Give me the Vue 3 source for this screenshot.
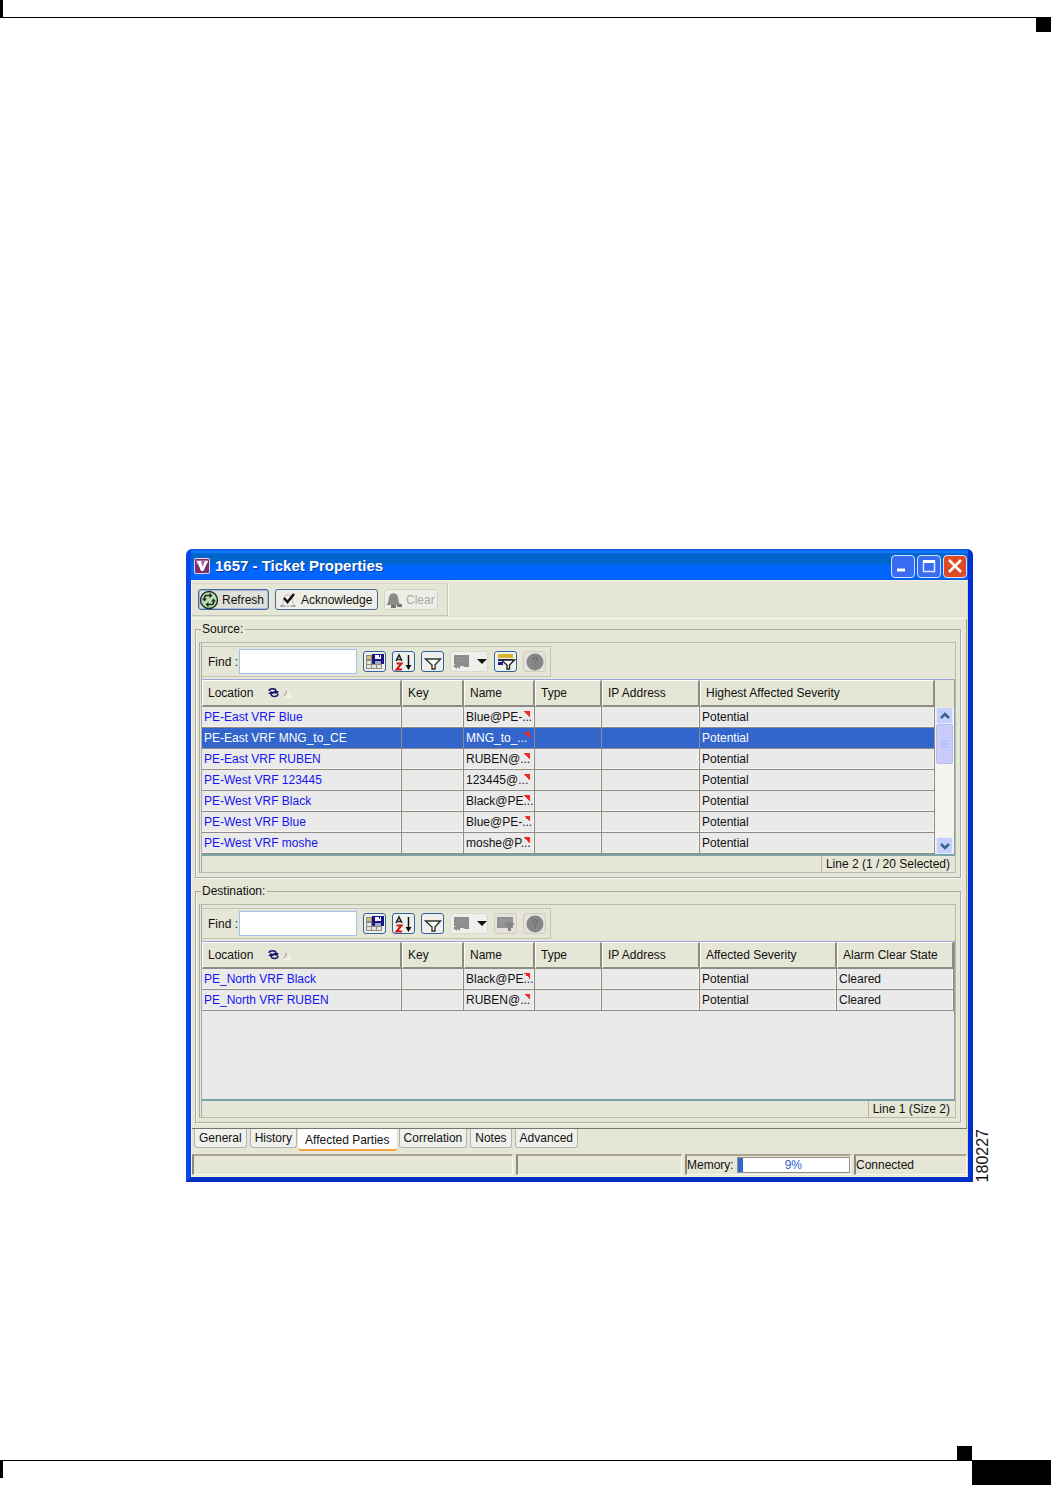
<script setup>
import { ref } from 'vue'

const panels = [
  {
    id: 'source',
    title: 'Source:',
    columns: ['Location', 'Key', 'Name', 'Type', 'IP Address', 'Highest Affected Severity'],
    rows: [
      ['PE-East VRF Blue', '', 'Blue@PE-...', '', '', 'Potential'],
      ['PE-East VRF MNG_to_CE', '', 'MNG_to_...', '', '', 'Potential'],
      ['PE-East VRF RUBEN', '', 'RUBEN@...', '', '', 'Potential'],
      ['PE-West VRF 123445', '', '123445@...', '', '', 'Potential'],
      ['PE-West VRF Black', '', 'Black@PE...', '', '', 'Potential'],
      ['PE-West VRF Blue', '', 'Blue@PE-...', '', '', 'Potential'],
      ['PE-West VRF moshe', '', 'moshe@P...', '', '', 'Potential'],
    ],
    selected: 1,
    scroll: true,
    status: 'Line 2 (1 / 20 Selected)',
  },
  {
    id: 'destination',
    title: 'Destination:',
    columns: ['Location', 'Key', 'Name', 'Type', 'IP Address', 'Affected Severity', 'Alarm Clear State'],
    rows: [
      ['PE_North VRF Black', '', 'Black@PE...', '', '', 'Potential', 'Cleared'],
      ['PE_North VRF RUBEN', '', 'RUBEN@...', '', '', 'Potential', 'Cleared'],
    ],
    selected: -1,
    scroll: false,
    status: 'Line 1 (Size 2)',
  },
]

const tabs = ['General', 'History', 'Affected Parties', 'Correlation', 'Notes', 'Advanced']
const activeTab = ref('Affected Parties')
const find = ref({ source: '', destination: '' })
const memory = 9
</script>

<template>
  <div class="page">
    <header class="page-head"><span class="head-mark"></span></header>

    <main class="figure">
      <div class="window">
        <div class="titlebar">
          <svg class="logo" width="16" height="16" viewBox="0 0 16 16" aria-hidden="true">
            <rect width="16" height="16" rx="2" fill="#e9d3e6" />
            <rect x="1" y="1" width="14" height="14" rx="1" fill="#7b2f6e" />
            <path d="M2 2h12v3L8 9 2 6z" fill="#a9679c" />
            <path d="M3 3h4l1.500 6L11 3h3L9.500 13H7z" fill="#fff" />
          </svg>
          <h1>1657 - Ticket Properties</h1>
          <button class="win-btn" aria-label="Minimize">
            <svg width="20" height="20" viewBox="0 0 20 20"><path d="M4 14h8" stroke="#fff" stroke-width="3" /></svg>
          </button>
          <button class="win-btn" aria-label="Maximize">
            <svg width="20" height="20" viewBox="0 0 20 20"><path d="M4.500 5.500h11v10h-11z" fill="none" stroke="#dfe8ff" stroke-width="1.500" /><path d="M4 5.500h12" stroke="#fff" stroke-width="3" /></svg>
          </button>
          <button class="win-btn close" aria-label="Close">
            <svg width="20" height="20" viewBox="0 0 20 20"><path d="M4 4l12 12M16 4L4 16" stroke="#fff" stroke-width="2.500" /></svg>
          </button>
        </div>

        <div class="client">
          <div class="toolbar">
            <div class="tool-group">
              <button class="tool-btn refresh">
                <svg width="20" height="20" viewBox="0 0 20 20" aria-hidden="true">
                  <circle cx="10" cy="10" r="8.500" fill="#b9dcb4" stroke="#1d2a1d" stroke-width="1.400" />
                  <path d="M5.500 9V7.500c0-1.500 1-2 2-2H11M14.500 11v1.500c0 1.500-1 2-2 2H9" fill="none" stroke="#1d2a1d" stroke-width="1.600" />
                  <path d="M10.500 2.800v5.400l3-2.700zM9.500 11.800v5.400l-3-2.700zM3 8.500h5l-2.500 3zM12 11.500h5l-2.500-3z" fill="#1d2a1d" />
                </svg>
                Refresh
              </button>
              <button class="tool-btn ack">
                <svg width="20" height="18" viewBox="0 0 20 18" aria-hidden="true">
                  <path d="M3 15c3-2 2-5 3-8 1-4 7-4 8 0 1 3 0 6 3 8z" fill="#f4f4f4" stroke="#b5b5b5" />
                  <path d="M2 15h5M13 15h5" stroke="#888" />
                  <path d="M6 7l3.500 4L16 3" fill="none" stroke="#111" stroke-width="2.500" />
                </svg>
                Acknowledge
              </button>
              <button class="tool-btn clear" disabled>
                <svg width="18" height="18" viewBox="0 0 18 18" aria-hidden="true">
                  <path d="M1 14c3-2 2-5 3-8 1-5 8-5 9 0 1 3 0 6 3 8z" fill="#8b8b8b" />
                  <path d="M6 14h5v3H6zM12 13h5v3h-5z" fill="#777" />
                </svg>
                Clear
              </button>
            </div>
          </div>

          <div class="content">
            <fieldset v-for="p in panels" :key="p.id" class="panel">
              <legend>{{ p.title }}</legend>
              <div class="panel-inner">
                <div class="finder">
                  <label :for="'find-' + p.id">Find :</label>
                  <input :id="'find-' + p.id" v-model="find[p.id]" type="text" />
                  <button class="icon-btn" aria-label="Export">
                    <svg width="20" height="18" viewBox="0 0 20 18">
                      <path d="M1 2h16v14H1z" fill="#8c8c84" />
                      <path d="M2 3h4v3H2z" fill="#d8c070" />
                      <path d="M2 8h4v3H2zM2 12h4v3H2zM7 12h4v3H7zM12 12h4v3h-4z" fill="#e4e4de" />
                      <path d="M7 1h12v10H8l-1-1z" fill="#171782" />
                      <path d="M10 2h6v4h-6z" fill="#f4f4ff" />
                      <path d="M14 1h1v3h-1z" fill="#171782" />
                      <path d="M10 8h6v3h-6z" fill="#a4a6c8" />
                    </svg>
                  </button>
                  <button class="icon-btn" aria-label="Sort">
                    <svg width="20" height="18" viewBox="0 0 20 18" fill="none">
                      <path d="M2 8l3-6 3 6M3 6.500h4" stroke="#222" stroke-width="1.500" />
                      <path d="M2.500 10.500h5l-5 6H8" stroke="#d01818" stroke-width="2" />
                      <path d="M14.500 2v12" stroke="#111" stroke-width="1.500" />
                      <path d="M11.500 12h6l-3 5z" fill="#111" />
                    </svg>
                  </button>
                  <button class="icon-btn" aria-label="Filter">
                    <svg width="20" height="18" viewBox="0 0 20 18" fill="none">
                      <path d="M2.500 6h15l-5.500 6v4H9v-4z" fill="#fafafa" stroke="#333" stroke-width="1.400" />
                    </svg>
                  </button>
                  <button class="icon-btn wide" aria-label="Add filter" disabled>
                    <svg width="36" height="18" viewBox="0 0 36 18">
                      <path d="M3 2h15v12h-4l-2-1H9v3l-3-2v2l-4-3 4-3v1H3z" fill="#8c8c8c" />
                      <path d="M6 5h10M6 8h10" stroke="#9a9a9a" />
                      <path d="M26 6h10l-5 5z" fill="#111" />
                    </svg>
                  </button>
                  <button v-if="p.scroll" class="icon-btn" aria-label="Filtered rows">
                    <svg width="20" height="18" viewBox="0 0 20 18">
                      <path d="M2 1h15v4H2z" fill="#d9b52e" />
                      <path d="M2 6h15v2H2zM2 9h5v3H2z" fill="#1c1c94" />
                      <path d="M5.500 7h13L13.500 12v4h-2.500v-4z" fill="#fff" stroke="#222" stroke-width="1.400" />
                    </svg>
                  </button>
                  <button v-else class="icon-btn off" aria-label="Filtered rows" disabled>
                    <svg width="20" height="18" viewBox="0 0 20 18">
                      <path d="M1 2h16v11H1z" fill="#929292" />
                      <path d="M3 5h12M3 8h8" stroke="#9e9e9e" />
                      <path d="M8 8h11l-4 4v4h-3v-4z" fill="#858585" />
                    </svg>
                  </button>
                  <button class="icon-btn off" aria-label="Help" disabled>
                    <svg width="20" height="18" viewBox="0 0 20 18">
                      <circle cx="10" cy="9" r="8.500" fill="#868686" />
                      <path d="M8 7c0-3 4.500-3 4.500-.500C12.500 8.500 10 8.500 10 10.500M10 12v1.500" fill="none" stroke="#707070" stroke-width="1.300" />
                    </svg>
                  </button>
                </div>

                <div class="grid" :class="p.id">
                  <table>
                    <colgroup>
                      <col class="c-loc" /><col class="c-key" /><col class="c-name" /><col class="c-type" /><col class="c-ip" />
                      <col v-if="!p.scroll" class="c-sev" /><col />
                    </colgroup>
                    <thead>
                      <tr>
                        <th v-for="(c, i) in p.columns" :key="c" scope="col">
                          {{ c }}
                          <svg v-if="i === 0" class="sort" width="24" height="14" viewBox="0 0 24 14" aria-hidden="true">
                            <path d="M1 5c0-3 7-3 7 0M10 7.500c0 4-7 4-7 0M2 6.500h8" fill="none" stroke="#16166e" stroke-width="1.500" />
                            <path d="M5 5h6L8 8zM0 8h6L3 5z" fill="#16166e" />
                            <path d="M15.500 11l4-7" stroke="#999" /><path d="M19.500 4l3 7h-7" fill="none" stroke="#fff" />
                          </svg>
                        </th>
                      </tr>
                    </thead>
                    <tbody>
                      <tr v-for="(r, ri) in p.rows" :key="ri" :class="{ selected: ri === p.selected }">
                        <td v-for="(v, i) in r" :key="i" :class="{ name: i === 2 }">
                          <a v-if="i === 0" href="#">{{ v }}</a>
                          <template v-else>{{ v }}</template>
                        </td>
                      </tr>
                    </tbody>
                  </table>
                  <div v-if="p.scroll" class="scroll">
                    <div class="scroll-head"></div>
                    <button class="arrow" aria-label="Scroll up">
                      <svg width="12" height="8" viewBox="0 0 12 8"><path d="M2 6l4-4 4 4" fill="none" stroke="#3a6190" stroke-width="2.500" /></svg>
                    </button>
                    <div class="thumb">
                      <svg width="8" height="8" viewBox="0 0 8 8"><path d="M0 1h8M0 4h8M0 7h8" stroke="#9db8ee" /></svg>
                    </div>
                    <div class="track"></div>
                    <button class="arrow" aria-label="Scroll down">
                      <svg width="12" height="8" viewBox="0 0 12 8"><path d="M2 2l4 4 4-4" fill="none" stroke="#3a6190" stroke-width="2.500" /></svg>
                    </button>
                  </div>
                </div>
                <div class="line-status"><span>{{ p.status }}</span></div>
              </div>
            </fieldset>
          </div>

          <nav class="tabs">
            <button v-for="t in tabs" :key="t" :class="{ active: t === activeTab }" @click="activeTab = t">{{ t }}</button>
          </nav>

          <footer class="statusbar">
            <div class="field message"></div>
            <div class="field task"></div>
            <div class="field memory">
              <span>Memory:</span>
              <div class="meter" role="progressbar" aria-label="Memory" :aria-valuenow="memory">
                <div class="meter-fill"></div>
                <span class="meter-text">{{ memory }}%</span>
              </div>
            </div>
            <div class="field link">Connected</div>
          </footer>
        </div>
      </div>
      <div class="figure-id">180227</div>
    </main>

    <footer class="page-foot">
      <span class="foot-mark"></span>
      <div class="foot-bar"><span class="foot-tick"></span><span class="foot-number"></span></div>
    </footer>
  </div>
</template>

<style>
body {
  margin: 0;
  background: #fff;
}
</style>

<style scoped>
* {
  box-sizing: border-box;
}
.page {
  display: flex;
  flex-direction: column;
  min-height: 100vh;
  font: 12px/14px "Liberation Sans", Arial, sans-serif;
  color: #111;
}
button,
input {
  font: inherit;
  color: inherit;
  padding: 0;
  margin: 0;
}
svg {
  display: block;
  flex: none;
}

.page-head {
  display: flex;
  justify-content: flex-end;
  height: 18px;
  border-bottom: 1px solid #000;
  border-left: 3px solid #000;
}
.head-mark {
  flex: none;
  width: 15px;
  height: 14px;
  margin-top: 18px;
  background: #000;
}
.page-foot {
  margin-top: auto;
}
.foot-mark {
  display: block;
  width: 15px;
  height: 14px;
  margin: 0 79px 0 auto;
  background: #000;
}
.foot-bar {
  display: flex;
  justify-content: space-between;
  height: 25px;
  border-top: 1px solid #000;
}
.foot-tick {
  width: 3px;
  height: 17px;
  background: #000;
}
.foot-number {
  width: 79px;
  background: #000;
}

.figure {
  display: flex;
  align-items: flex-end;
  padding: 531px 58px 32px 186px;
}
.window {
  flex: 1;
  min-width: 0;
  background: #0a3fe0;
  border: solid #0a46ea;
  border-width: 0 5px 5px;
  border-right-color: #0030d0;
  border-bottom-color: #0030c8;
  border-radius: 6px 6px 0 0;
  overflow: hidden;
}
.titlebar {
  display: flex;
  align-items: center;
  gap: 2px;
  height: 31px;
  margin: 0 -5px;
  padding: 3px 6px 0 8px;
  background: linear-gradient(#0a55e0 0, #1a7bff 3px, #0066cc 5px, #0066cc 14px, #0066ff 17px, #0066ff 30px, #0b4fd0 31px);
  color: #fff;
}
.titlebar h1 {
  flex: 1;
  margin: 0 0 0 3px;
  font: bold 15px/16px "Liberation Sans", Arial, sans-serif;
  text-shadow: 1px 1px 0 #0a3a9a;
}
.win-btn {
  width: 24px;
  height: 23px;
  padding: 0 1px;
  border: 1px solid #d5e2ff;
  border-radius: 4px;
  background: #3a6cf2;
}
.win-btn.close {
  background: #df4a24;
}

.client {
  border: 1px solid #f8f6da;
  border-right-color: #d9d8bc;
  background: #e6e6d6;
}
.toolbar {
  height: 36px;
  border-bottom: 1px solid #fafaf2;
}
.tool-group {
  display: flex;
  align-items: center;
  gap: 6px;
  width: 256px;
  height: 33px;
  margin-top: 2px;
  padding-left: 6px;
  border: 1px solid #c6c6ba;
  border-left: 0;
  border-top-color: #d6d6ca;
  box-shadow: 1px 0 0 #fafaf2;
}
.tool-btn {
  display: flex;
  align-items: center;
  gap: 3px;
  height: 21px;
  border: 1px solid #44699c;
  border-radius: 3px;
  background: #eeeee6;
  white-space: nowrap;
}
.refresh {
  width: 71px;
  background: #dfe0da;
  box-shadow: inset 0 0 0 1px #a9b8d8;
}
.ack {
  width: 103px;
  padding-left: 2px;
}
.clear {
  width: 54px;
  border-color: #d3d0c6;
  color: #aaa;
}

.content {
  padding: 3px 5px 5px 3px;
  border-right: 1px solid #a9a88e;
}
.panel {
  min-width: 0;
  margin: 0 0 6px;
  padding: 6px 4px 4px 3px;
  border: 1px solid #aaa;
  box-shadow: inset 1px 0 0 #f6f6ec, 1px 1px 0 #f8f8ee;
}
.panel:last-child {
  margin-bottom: 0;
}
.panel legend {
  height: 14px;
  margin-left: 2px;
  padding: 0 2px 0 1px;
}
.panel-inner {
  border: 1px solid #b9b9ad;
  border-left: 3px double #aaa;
}
.finder {
  display: flex;
  align-items: center;
  gap: 6px;
  width: 349px;
  height: 31px;
  margin: 3px 0 2px;
  padding-left: 6px;
  border: 1px solid #c3c3b8;
  border-left: 0;
}
.finder label {
  width: 25px;
  white-space: nowrap;
}
.finder input {
  width: 118px;
  height: 25px;
  border: 1px solid #9cc3ea;
  background: #fff;
}
.icon-btn {
  display: flex;
  flex: none;
  align-items: center;
  justify-content: center;
  width: 23px;
  height: 21px;
  border: 1px solid #33639c;
  border-radius: 3px;
  background: #eef0ec;
}
.icon-btn.wide {
  width: 38px;
  border-color: #dcd8ce;
}
.icon-btn.off {
  border-color: #cfccc2;
  background: #e4e2da;
}

.grid {
  display: flex;
  align-items: flex-start;
  border: solid #7aa3a6;
  border-width: 1px 1px 2px 0;
  border-top-color: #9aa4d8;
  background: #eaeaea;
}
.grid.destination {
  min-height: 160px;
}
table {
  flex: 1;
  min-width: 0;
  width: 0;
  table-layout: fixed;
  border-collapse: separate;
  border-spacing: 0;
}
.c-loc {
  width: 200px;
}
.c-key {
  width: 62px;
}
.c-name {
  width: 71px;
}
.c-type {
  width: 67px;
}
.c-ip {
  width: 98px;
}
.c-sev {
  width: 137px;
}
th {
  position: relative;
  height: 27px;
  padding: 0 0 0 5px;
  border: solid #fff;
  border-width: 1px 2px 2px 1px;
  border-right-color: #8d8c84;
  border-bottom-color: #8d8c84;
  background: #e6e6d6;
  font-weight: normal;
  text-align: left;
  white-space: nowrap;
}
.sort {
  position: absolute;
  top: 5px;
  left: 65px;
}
td {
  height: 21px;
  padding: 0 0 0 2px;
  border: solid #8d8c88;
  border-width: 0 1px 1px 0;
  background: #eaeaea;
  box-shadow: inset -1px -1px 0 #f8f4ea;
  white-space: nowrap;
  overflow: hidden;
}
td a {
  color: #1414f0;
  text-decoration: none;
}
td.name {
  position: relative;
}
td.name::after {
  content: "";
  position: absolute;
  top: 4px;
  right: 4px;
  width: 6px;
  height: 6px;
  background: linear-gradient(to top right, transparent 50%, #f02828 50%);
}
.selected td,
.selected td a {
  background: #3366cc;
  color: #fff;
}
.selected td {
  box-shadow: none;
}

.scroll {
  display: flex;
  flex-direction: column;
  align-self: stretch;
  width: 19px;
  padding: 0 1px;
  background: #f6f4ee;
}
.scroll-head {
  height: 27px;
  margin: 0 -1px;
  background: #e6e6d6;
}
.arrow {
  display: flex;
  align-items: center;
  justify-content: center;
  height: 17px;
  border: 1px solid #e4e8fc;
  border-radius: 2px;
  background: #c6d0fa;
}
.thumb {
  display: flex;
  align-items: center;
  justify-content: center;
  height: 40px;
  border: 1px solid #b4bff0;
  border-radius: 2px;
  background: #cbcbfb;
}
.track {
  flex: 1;
}
.line-status {
  display: flex;
  justify-content: flex-end;
  height: 16px;
}
.line-status span {
  padding: 1px 5px 0 4px;
  border-left: 1px solid #c4b3a4;
}

.tabs {
  display: flex;
  align-items: flex-start;
  gap: 3px;
  height: 26px;
  padding-left: 2px;
  border-top: 1px solid #77766c;
}
.tabs button {
  height: 19px;
  padding: 0 4px 1px;
  border: 1px solid #b4b4ac;
  border-top: 0;
  border-radius: 0 0 3px 3px;
  background: #f0f0ec;
  white-space: nowrap;
}
.tabs .active {
  height: 22px;
  margin: 0 -1px 0 -2px;
  padding: 2px 7px 0;
  border: 0;
  border-bottom: 2px solid #f9a040;
  background: #fff;
}

.statusbar {
  display: flex;
  gap: 3px;
  height: 22px;
}
.field {
  display: flex;
  align-items: center;
  height: 21px;
  border: solid #fafaf4;
  border-width: 2px 1px 1px 2px;
  border-top-color: #a9a58e;
  border-left-color: #8d8a7c;
  white-space: nowrap;
}
.message {
  flex: 1;
}
.task {
  width: 166px;
}
.memory {
  width: 166px;
  gap: 3px;
}
.link {
  width: 113px;
}
.meter {
  position: relative;
  flex: 1;
  height: 16px;
  border: 1px solid #8f8f8f;
  background: #fff;
  text-align: center;
  color: #2a62d0;
}
.meter-fill {
  position: absolute;
  inset: 0 auto 0 0;
  width: 5%;
  background: #3366cc;
}
.meter-text {
  position: relative;
}

.figure-id {
  width: 20px;
  font-size: 16px;
  line-height: 20px;
  writing-mode: vertical-rl;
  transform: rotate(180deg);
}
</style>
